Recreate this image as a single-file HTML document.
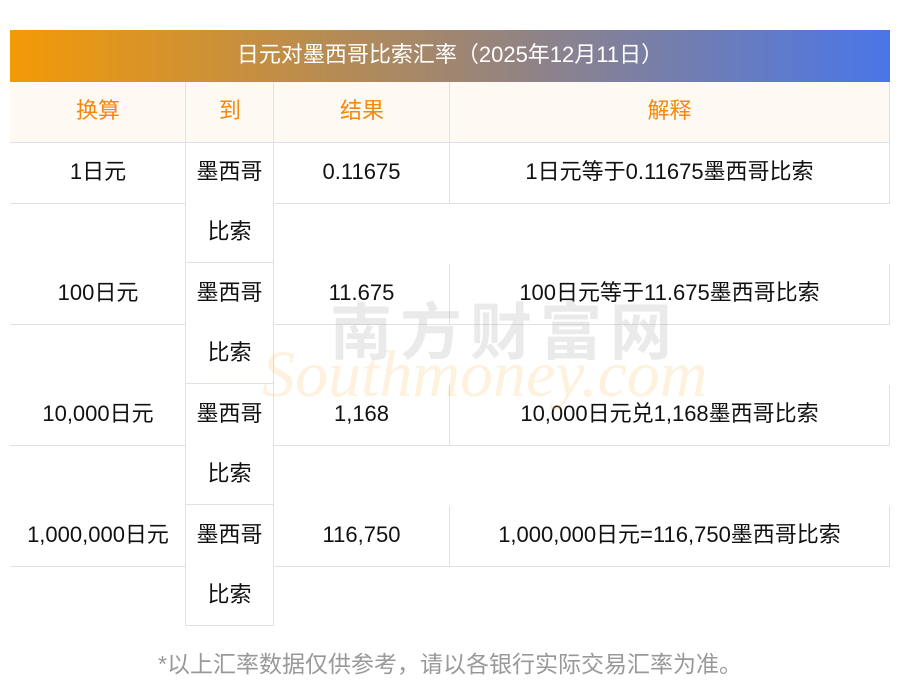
<!DOCTYPE html>
<html><head><meta charset="utf-8"><style>
body{margin:0;width:900px;height:693px;background:#fff;position:relative;overflow:hidden;font-family:"Liberation Sans","Noto Sans CJK SC",sans-serif;}
.a{position:absolute;box-sizing:border-box;display:flex;align-items:center;justify-content:center;font-size:22px;color:#111;line-height:24px;padding-bottom:3px;white-space:nowrap}
.title{left:10px;top:30px;width:880px;height:52px;background:linear-gradient(90deg,#f39a06,#a08670 50%,#4a76e8);color:#fff;font-size:22px;}
.h{top:82px;height:61px;background:#fff9f3;color:#f5870c;border-bottom:1px solid #e0e0e8;}
.bl{border-left:1px solid #e0e0e8}.br{border-right:1px solid #e0e0e8}.bb{border-bottom:1px solid #e0e0e8}.bt{border-top:1px solid #e0e0e8}
.c2{flex-direction:column;justify-content:flex-start;line-height:60px;padding:0;margin-top:-1px}
.wm1{position:absolute;left:330px;top:292px;font-size:62px;line-height:70px;color:rgba(150,150,150,0.2);letter-spacing:8px;font-family:"Noto Sans CJK SC",sans-serif;font-weight:bold;}
.wm2{position:absolute;left:262px;top:340px;font-size:66px;line-height:70px;color:rgba(252,200,120,0.25);font-style:italic;font-family:"Liberation Serif",serif;}
</style></head><body>
<div class="a title">日元对墨西哥比索汇率（2025年12月11日）</div>
<div class="a h" style="left:10px;width:176px">换算</div>
<div class="a h bl" style="left:185px;width:89px">到</div>
<div class="a h bl" style="left:273px;width:177px">结果</div>
<div class="a h bl br" style="left:449px;width:441px">解释</div>

<div class="a bb" style="left:10px;top:143px;width:176px;height:61px">1日元</div>
<div class="a c2 bl br" style="left:185px;top:143px;width:89px;height:121px"><div>墨西哥</div><div>比索</div></div>
<div class="a bb" style="left:273px;top:143px;width:177px;height:61px">0.11675</div>
<div class="a bb bl br" style="left:449px;top:143px;width:441px;height:61px">1日元等于0.11675墨西哥比索</div>

<div class="a bb" style="left:10px;top:264px;width:176px;height:61px">100日元</div>
<div class="a c2 bl br bt" style="left:185px;top:263px;width:89px;height:122px"><div>墨西哥</div><div>比索</div></div>
<div class="a bb" style="left:273px;top:264px;width:177px;height:61px">11.675</div>
<div class="a bb bl br" style="left:449px;top:264px;width:441px;height:61px">100日元等于11.675墨西哥比索</div>

<div class="a bb" style="left:10px;top:385px;width:176px;height:61px">10,000日元</div>
<div class="a c2 bl br bt" style="left:185px;top:384px;width:89px;height:122px"><div>墨西哥</div><div>比索</div></div>
<div class="a bb" style="left:273px;top:385px;width:177px;height:61px">1,168</div>
<div class="a bb bl br" style="left:449px;top:385px;width:441px;height:61px">10,000日元兑1,168墨西哥比索</div>

<div class="a bb" style="left:10px;top:506px;width:176px;height:61px">1,000,000日元</div>
<div class="a c2 bl br bt bb" style="left:185px;top:505px;width:89px;height:122px"><div>墨西哥</div><div>比索</div></div>
<div class="a bb" style="left:273px;top:506px;width:177px;height:61px">116,750</div>
<div class="a bb bl br" style="left:449px;top:506px;width:441px;height:61px">1,000,000日元=116,750墨西哥比索</div>

<div class="wm1">南方财富网</div>
<div class="wm2">Southmoney.com</div>

<div class="a" style="left:0;top:648px;width:900px;height:32px;font-size:23px;color:#999;padding:0">*以上汇率数据仅供参考，请以各银行实际交易汇率为准。</div>
</body></html>
